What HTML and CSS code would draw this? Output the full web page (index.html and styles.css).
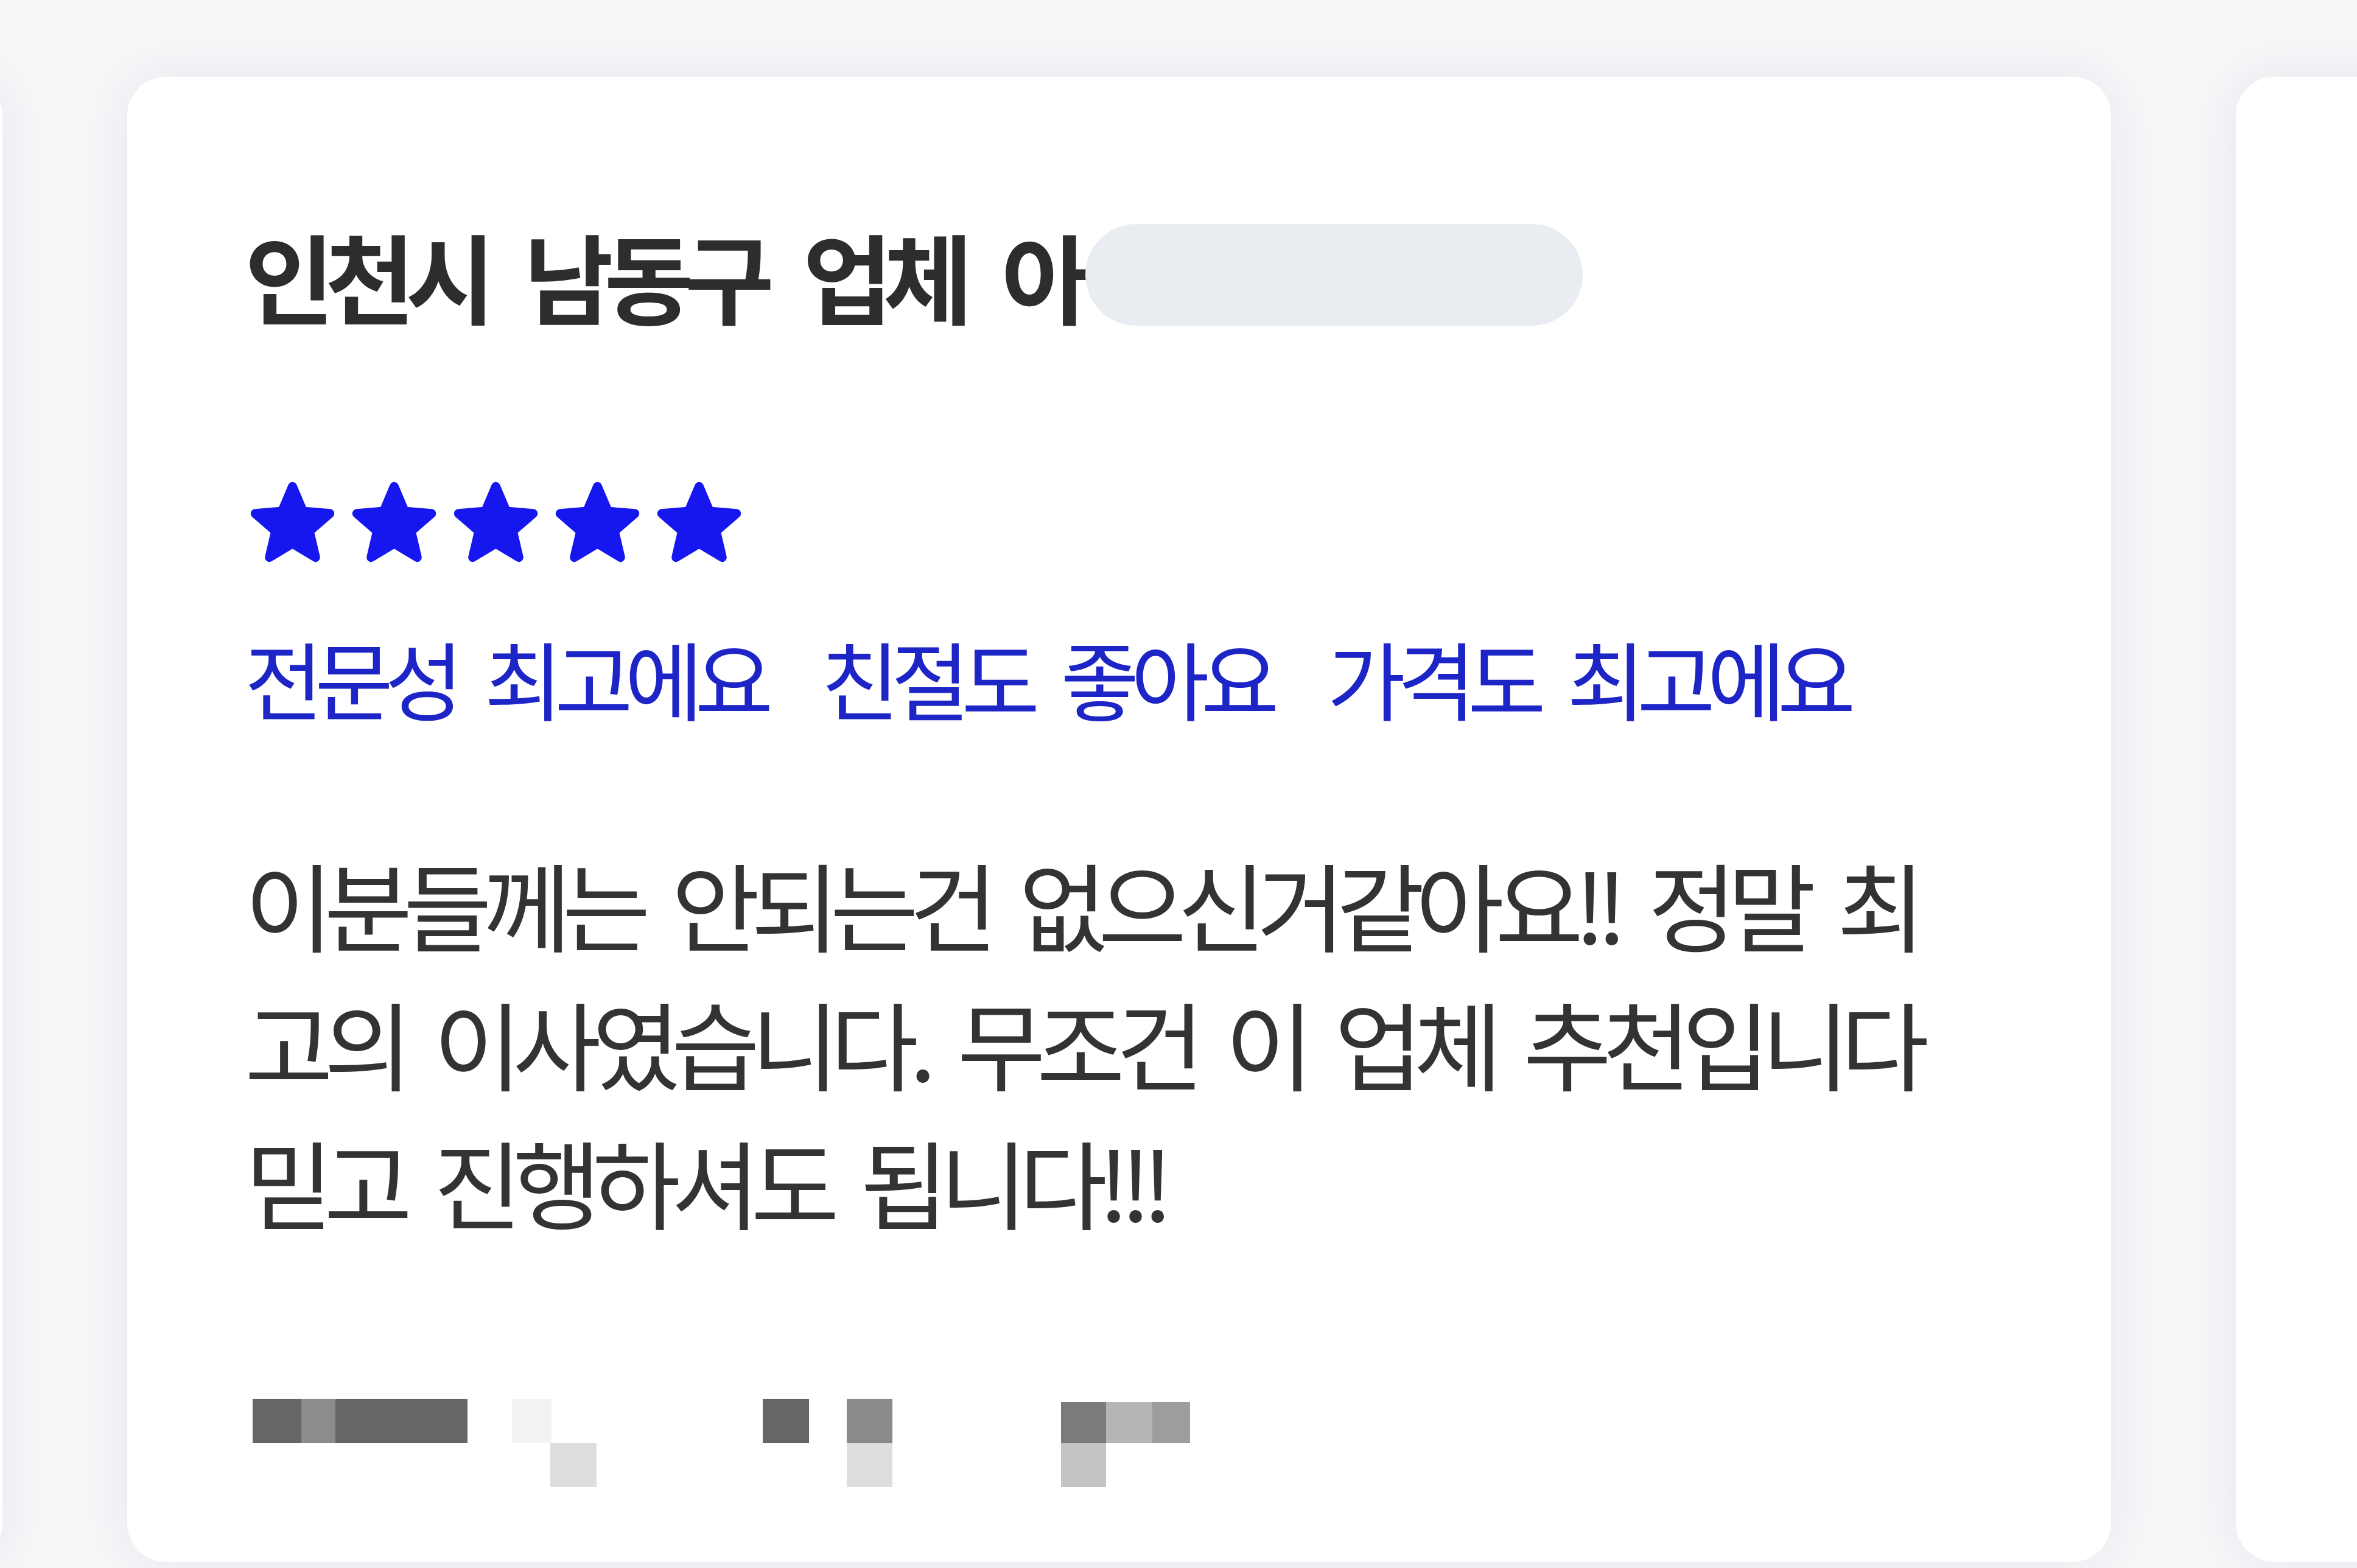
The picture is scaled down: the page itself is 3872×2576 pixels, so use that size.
FILE: index.html
```html
<!DOCTYPE html>
<html lang="ko">
<head>
<meta charset="utf-8">
<title>리뷰</title>
<link rel="stylesheet" href="styles.css">
</head>
<body>
<div class="track">
  <article class="card card-prev" aria-hidden="true"></article>
  <article class="card">
    <div class="title-row"><h2 class="title">인천시 남동구 업체 아</h2><span class="mask"></span></div>
    <div class="stars">
      <svg class="star" viewBox="1 1 22 21"><path d="M12 17.27L18.18 21l-1.64-7.03L22 9.24l-7.19-.61L12 2 9.19 8.63 2 9.24l5.46 4.73L5.82 21z"/></svg>
      <svg class="star" viewBox="1 1 22 21"><path d="M12 17.27L18.18 21l-1.64-7.03L22 9.24l-7.19-.61L12 2 9.19 8.63 2 9.24l5.46 4.73L5.82 21z"/></svg>
      <svg class="star" viewBox="1 1 22 21"><path d="M12 17.27L18.18 21l-1.64-7.03L22 9.24l-7.19-.61L12 2 9.19 8.63 2 9.24l5.46 4.73L5.82 21z"/></svg>
      <svg class="star" viewBox="1 1 22 21"><path d="M12 17.27L18.18 21l-1.64-7.03L22 9.24l-7.19-.61L12 2 9.19 8.63 2 9.24l5.46 4.73L5.82 21z"/></svg>
      <svg class="star" viewBox="1 1 22 21"><path d="M12 17.27L18.18 21l-1.64-7.03L22 9.24l-7.19-.61L12 2 9.19 8.63 2 9.24l5.46 4.73L5.82 21z"/></svg>
    </div>
    <div class="tags"><span class="tag">전문성 최고에요</span><span class="tag">친절도 좋아요</span><span class="tag">가격도 최고에요</span></div>
    <p class="body">이분들께는 안되는건 없으신거같아요!! 정말 최고의 이사였습니다. 무조건 이 업체 추천입니다 믿고 진행하셔도 됩니다!!!</p>
    <svg class="mosaic" viewBox="0 0 1560 146" width="1560" height="146">
      <rect x="13" y="0" width="80" height="73" fill="#666"/>
      <rect x="93" y="0" width="56" height="73" fill="#8c8c8c"/>
      <rect x="149" y="0" width="217" height="73" fill="#666"/>
      <rect x="439" y="0" width="65" height="73" fill="#f3f3f3"/>
      <rect x="851" y="0" width="76" height="73" fill="#666"/>
      <rect x="989" y="0" width="75" height="73" fill="#8a8a8a"/>
      <rect x="1341" y="5" width="74" height="68" fill="#7b7b7b"/>
      <rect x="1415" y="5" width="76" height="68" fill="#b5b5b5"/>
      <rect x="1491" y="5" width="62" height="68" fill="#9d9d9d"/>
      <rect x="502" y="73" width="76" height="72" fill="#dedede"/>
      <rect x="989" y="73" width="75" height="72" fill="#dedede"/>
      <rect x="1341" y="73" width="74" height="72" fill="#c4c4c4"/>
    </svg>
  </article>
  <article class="card">
    <div class="title-row"><h2 class="title">인천시 연수구 업체 이</h2><span class="mask"></span></div>
    <div class="stars">
      <svg class="star" viewBox="1 1 22 21"><path d="M12 17.27L18.18 21l-1.64-7.03L22 9.24l-7.19-.61L12 2 9.19 8.63 2 9.24l5.46 4.73L5.82 21z"/></svg>
      <svg class="star" viewBox="1 1 22 21"><path d="M12 17.27L18.18 21l-1.64-7.03L22 9.24l-7.19-.61L12 2 9.19 8.63 2 9.24l5.46 4.73L5.82 21z"/></svg>
      <svg class="star" viewBox="1 1 22 21"><path d="M12 17.27L18.18 21l-1.64-7.03L22 9.24l-7.19-.61L12 2 9.19 8.63 2 9.24l5.46 4.73L5.82 21z"/></svg>
      <svg class="star" viewBox="1 1 22 21"><path d="M12 17.27L18.18 21l-1.64-7.03L22 9.24l-7.19-.61L12 2 9.19 8.63 2 9.24l5.46 4.73L5.82 21z"/></svg>
      <svg class="star" viewBox="1 1 22 21"><path d="M12 17.27L18.18 21l-1.64-7.03L22 9.24l-7.19-.61L12 2 9.19 8.63 2 9.24l5.46 4.73L5.82 21z"/></svg>
    </div>
    <div class="tags"><span class="tag">친절도 좋아요</span><span class="tag">가격도 최고에요</span></div>
    <p class="body">친절하게 잘 해주셔서 너무 감사합니다. 다음에도 꼭 이용하고 싶어요. 기사님들 모두 고생 많으셨습니다</p>
    <svg class="mosaic" viewBox="0 0 1560 146" width="1560" height="146">
      <rect x="13" y="0" width="80" height="73" fill="#666"/>
      <rect x="149" y="0" width="217" height="73" fill="#666"/>
    </svg>
  </article>
</div>
</body>
</html>
```

FILE: styles.css
```css
html, body {
  margin: 0;
  padding: 0;
  background: #f6f7f9;
  overflow: hidden;
  width: 3872px;
  height: 2576px;
}

body {
  font-family: "Noto Sans CJK KR", "Noto Sans", sans-serif;
}

.track {
  display: flex;
  gap: 205px;
  margin-left: -3255px;
  padding-top: 126px;
}

.card {
  flex: 0 0 3259px;
  box-sizing: border-box;
  padding: 0 193px 122px 193px;
  background: #ffffff;
  border-radius: 64px;
  box-shadow: 0 0 90px rgba(30, 40, 70, 0.08);
}

.title-row {
  display: flex;
  align-items: center;
  margin-top: 229px;
  height: 192px;
}

.title {
  margin: 0;
  font-size: 160px;
  line-height: 192px;
  font-weight: 700;
  letter-spacing: -15px;
  word-spacing: 32px;
  color: #2d2d2d;
  white-space: nowrap;
}

.mask {
  display: block;
  width: 817px;
  height: 167px;
  margin-left: 6px;
  border-radius: 84px;
  background: #e9ecf1;
}

.stars {
  display: flex;
  gap: 32px;
  margin-top: 246px;
  margin-left: 11px;
}

.star {
  display: block;
  width: 135px;
  height: 129px;
  fill: #1616ee;
  stroke: #1616ee;
  stroke-width: 2.4;
  stroke-linejoin: round;
  overflow: visible;
}

.tags {
  display: flex;
  gap: 92px;
  margin-top: 106px;
}

.tag {
  font-size: 140px;
  line-height: 168px;
  letter-spacing: -13.5px;
  word-spacing: 22px;
  color: #1e25c6;
  white-space: nowrap;
}

.body {
  margin: 174px 0 0 0;
  font-size: 158px;
  line-height: 228px;
  letter-spacing: -15px;
  word-spacing: 20px;
  color: #333333;
}

.mosaic {
  display: block;
  margin-top: 244px;
}
```
